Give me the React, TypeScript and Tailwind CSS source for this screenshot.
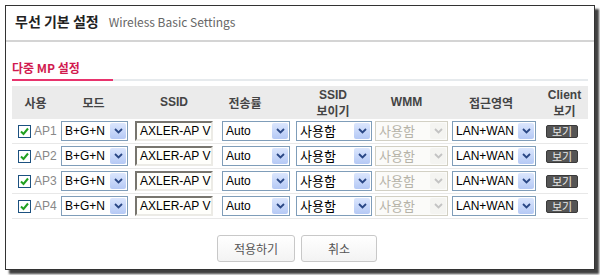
import type { ReactNode } from 'react'

const KR = "font-['Noto_Sans_CJK_KR',sans-serif]"
const MIX = "font-['Liberation_Sans','Noto_Sans_CJK_KR',sans-serif]"

const rows = ['AP1', 'AP2', 'AP3', 'AP4']

function Chevron({ disabled }: { disabled?: boolean }) {
  return (
    <svg width="9" height="6" viewBox="0 0 9 6">
      <path
        d="M1 1 L4.5 4.5 L8 1"
        fill="none"
        stroke={disabled ? '#c3c3c3' : '#2a4785'}
        strokeWidth="1.8"
      />
    </svg>
  )
}

function Select({ value, width, disabled, kr }: { value: string; width: string; disabled?: boolean; kr?: boolean }) {
  return (
    <div
      className={`${width} h-[20px] flex items-center border ${
        disabled ? 'border-[#d2d0c4] bg-[#fbfbf9] text-[#b6b3a8]' : 'border-[#7f9db9] bg-white text-black'
      }`}
    >
      <span
        className={`flex-1 pl-[3px] leading-none whitespace-nowrap overflow-hidden ${
          kr ? 'text-[13px]' : 'text-[12px]'
        } ${MIX}`}
      >
        {value}
      </span>
      <span
        className={`w-[16px] h-[16px] mr-[1px] shrink-0 flex items-center justify-center rounded-[2px] ${
          disabled ? 'bg-[#f4f4f1]' : 'bg-gradient-to-b from-[#dbe6fd] to-[#b5c9f5]'
        }`}
      >
        <Chevron disabled={disabled} />
      </span>
    </div>
  )
}

function Check() {
  return (
    <svg width="13" height="13" viewBox="0 0 13 13" className="shrink-0">
      <rect x="0.5" y="0.5" width="12" height="12" fill="#fff" stroke="#1c5180" />
      <path d="M3 6.5 L5.5 9 L10 3.5" fill="none" stroke="#21a121" strokeWidth="2" />
    </svg>
  )
}

function Head({ children, className = '' }: { children: ReactNode; className?: string }) {
  return (
    <div className={`flex flex-col items-center justify-center text-center text-[12px] leading-[15px] font-bold text-[#444] ${className}`}>
      {children}
    </div>
  )
}

const cols = 'grid grid-cols-[47px_72px_86px_76px_80px_77px_90px_48px]'

export default function App() {
  return (
    <div className="w-[600px] h-[275px] bg-white pt-[5px] pl-[5px]">
      <div className={`w-[590px] h-[265px] border border-[#333] bg-white shadow-[4px_4px_2px_rgba(0,0,0,0.75)] ${KR}`}>
        <div className="h-[36px] flex items-center pl-[9px] pb-[3px] gap-[10px] border-b-2 border-[#d4d4d4]">
          <span className="text-[14px] font-bold text-[#222]">무선 기본 설정</span>
          <span className="text-[12px] text-[#666]">Wireless Basic Settings</span>
        </div>

        <div className="px-[6px]">
          <div className="flex items-end h-[39px]">
            <div className="w-[101px] border-b-2 border-[#e8336d] pb-[5px] text-[12px] font-bold text-[#d11a4f] leading-none">
              다중 MP 설정
            </div>
            <div className="flex-1 border-b-2 border-[#e6eaed]" />
          </div>

          <div className={`mt-[5px] ${cols} h-[33px] bg-[#ebebeb]`}>
            <Head>사용</Head>
            <Head className="pr-[3px]">모드</Head>
            <Head className={MIX}>SSID</Head>
            <Head className="pr-[20px]">전송률</Head>
            <Head>
              <span className={MIX}>SSID</span>
              <span>보이기</span>
            </Head>
            <Head className={`pr-[10px] ${MIX}`}>WMM</Head>
            <Head className="pr-[8px]">접근영역</Head>
            <Head className="pl-[1px]">
              <span className={MIX}>Client</span>
              <span>보기</span>
            </Head>
          </div>

          {rows.map((ap) => (
            <div key={ap} className={`${cols} h-[25px] border-b border-[#e8e8e8] items-center`}>
              <div className="flex items-center pl-[6px] gap-[3px]">
                <Check />
                <span className={`text-[12px] text-[#888] ${MIX}`}>{ap}</span>
              </div>
              <div className="pl-[2px]">
                <Select value="B+G+N" width="w-[67px]" />
              </div>
              <div className="pl-[4px]">
                <div
                  className={`w-[78px] h-[20px] flex items-center pl-[3px] overflow-hidden whitespace-nowrap border-2 border-t-[#77756e] border-l-[#77756e] border-b-[#ecebe6] border-r-[#ecebe6] bg-[#fffffb] text-[12px] leading-none text-black ${MIX}`}
                >
                  AXLER-AP V
                </div>
              </div>
              <div className="pl-[5px]">
                <Select value="Auto" width="w-[68px]" />
              </div>
              <div className="pl-[3px]">
                <Select value="사용함" width="w-[76px]" kr />
              </div>
              <div className="pl-[2px]">
                <Select value="사용함" width="w-[73px]" disabled kr />
              </div>
              <div className="pl-[2px]">
                <Select value="LAN+WAN" width="w-[84px]" />
              </div>
              <div className="pl-[6px]">
                <div className="w-[32px] h-[13px] flex items-center justify-center rounded-[2px] bg-[#555] border border-[#3a3a3a] text-[11px] leading-none text-[#e6e6e6]">
                  보기
                </div>
              </div>
            </div>
          ))}

          <div className="flex justify-center gap-[6px] mt-[16px] pr-[6px]">
            <button className="w-[78px] h-[27px] border border-[#c8c8c8] rounded-[3px] bg-gradient-to-b from-white to-[#f3f3f3] text-[12px] text-[#555]">
              적용하기
            </button>
            <button className="w-[76px] h-[27px] border border-[#c8c8c8] rounded-[3px] bg-gradient-to-b from-white to-[#f3f3f3] text-[12px] text-[#555]">
              취소
            </button>
          </div>
        </div>
      </div>
    </div>
  )
}
